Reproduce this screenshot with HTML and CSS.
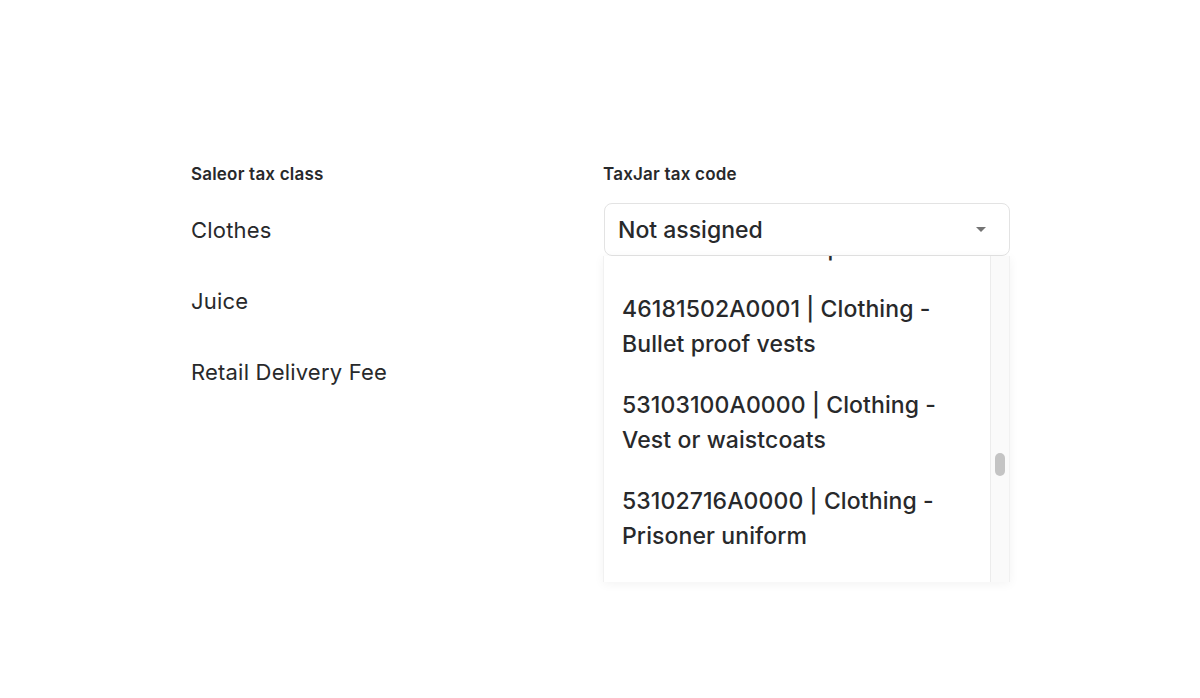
FILE: index.html
```html
<!DOCTYPE html>
<html>
<head>
<meta charset="utf-8">
<link rel="stylesheet" href="styles.css">
</head>
<body>
<div class="page">
  <div class="table">
    <div class="head">Saleor tax class</div>
    <div class="head">TaxJar tax code</div>

    <div class="cell name">Clothes</div>
    <div class="cell picker">
      <div class="select">
        <span class="value">Not assigned</span>
        <svg class="caret" width="12" height="7" viewBox="0 0 12 7"><path d="M1 1h10L6 6z" fill="#747474"/></svg>
      </div>
      <div class="menu">
        <div class="list">
          <div class="option">53103000A0000 | Clothing -<br>Undershirts and tops</div>
          <div class="option">46181502A0001 | Clothing -<br>Bullet proof vests</div>
          <div class="option">53103100A0000 | Clothing -<br>Vest or waistcoats</div>
          <div class="option">53102716A0000 | Clothing -<br>Prisoner uniform</div>
          <div class="option">53102712A0000 | Clothing -<br>Ambulance uniforms</div>
        </div>
        <div class="track"><div class="thumb"></div></div>
      </div>
    </div>

    <div class="cell name">Juice</div>
    <div class="cell"></div>

    <div class="cell name">Retail Delivery Fee</div>
    <div class="cell"></div>
  </div>
</div>
</body>
</html>
```

FILE: styles.css
```css
html, body {
  margin: 0;
  padding: 0;
  background: #ffffff;
}

body {
  font-family: Inter, "Noto Sans", "Liberation Sans", sans-serif;
  color: #28292b;
}

.page {
  padding: 164px 0 0 191px;
  height: 534px;
}

.table {
  display: grid;
  grid-template-columns: 412px 407px;
  grid-auto-rows: 71px;
  grid-template-rows: 30px;
}

.head {
  font-size: 17px;
  line-height: 20px;
  font-weight: 600;
  letter-spacing: 0.2px;
}

.cell {
  display: flex;
  align-items: center;
}

.name {
  font-size: 22px;
  line-height: 30px;
  font-weight: 400;
  letter-spacing: 0.2px;
}

.picker {
  position: relative;
}

.select {
  box-sizing: border-box;
  width: 406px;
  height: 53px;
  margin-left: 1px;
  border: 1px solid #e3e3e3;
  border-radius: 8px;
  display: flex;
  align-items: center;
  justify-content: space-between;
  padding: 0 22px 0 13px;
  background: #fff;
}

.value {
  font-size: 23px;
  font-weight: 500;
  line-height: 30px;
}

.caret {
  display: block;
}

.menu {
  position: absolute;
  left: 0;
  top: 62px;
  width: 407px;
  height: 326px;
  box-sizing: border-box;
  background: #fff;
  border-left: 1px solid #f1f1f1;
  border-right: 1px solid #f1f1f1;
  box-shadow: 0 2px 10px rgba(0, 0, 0, 0.05);
  display: flex;
  overflow: hidden;
}

.list {
  flex: 1;
  overflow: hidden;
}

.list .option:first-child {
  margin-top: -73px;
}

.option {
  padding: 13px 0 13px 18px;
  font-size: 23px;
  font-weight: 500;
  line-height: 35px;
  letter-spacing: 0.1px;
  white-space: nowrap;
}

.track {
  width: 18px;
  flex: none;
  background: #fafafa;
  border-left: 1px solid #ececec;
}

.thumb {
  width: 10px;
  height: 23px;
  margin: 197px 0 0 4px;
  border-radius: 5px;
  background: #c4c4c4;
}
```
